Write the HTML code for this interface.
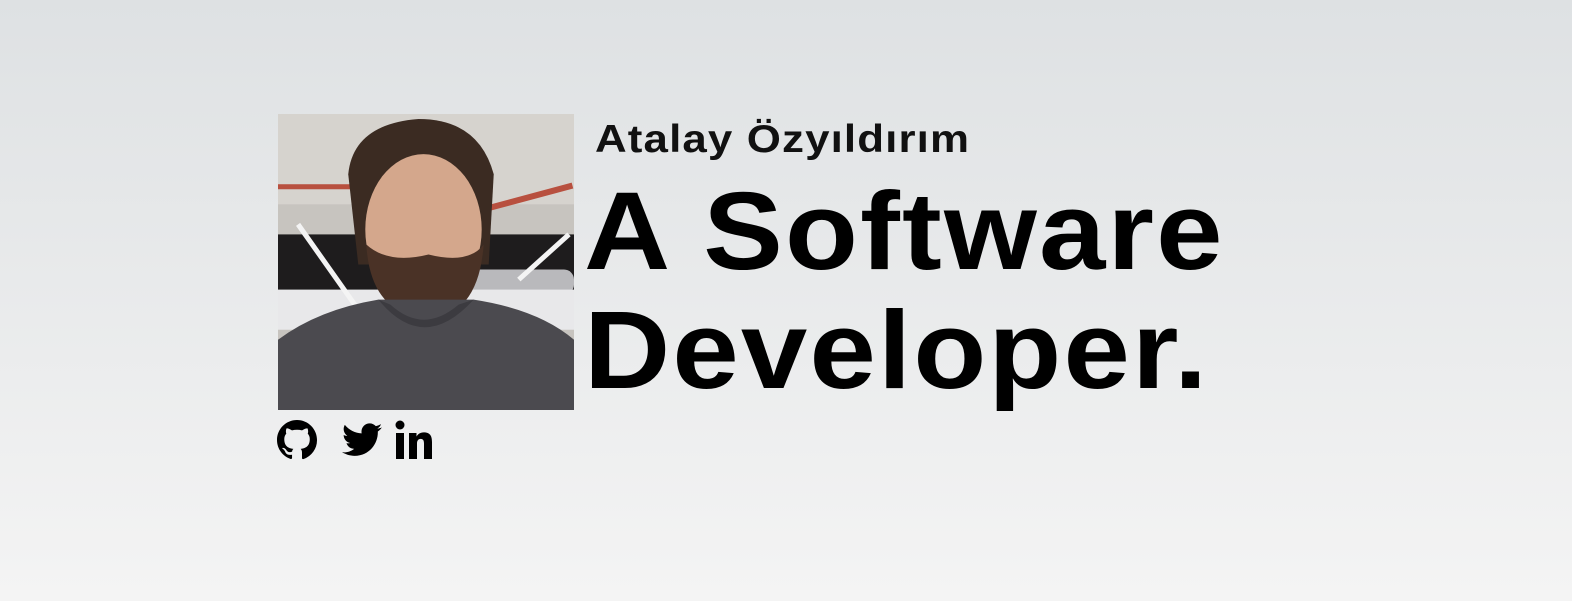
<!DOCTYPE html>
<html><head><style>
html,body{margin:0;width:1572px;height:601px;overflow:hidden}
body{background:linear-gradient(#dee1e3,#f4f4f4);font-family:"Liberation Sans",sans-serif;position:relative}
.photo{position:absolute;left:278px;top:114px;width:296px;height:296px;overflow:hidden;background:#c9c6c2}
.name{position:absolute;left:595px;top:118px;font-size:39px;font-weight:bold;letter-spacing:1px;color:#111;transform:scaleX(1.125);transform-origin:0 0;white-space:nowrap}
.big{position:absolute;left:584px;top:172px;font-size:110px;font-weight:bold;letter-spacing:2px;line-height:119px;color:#000;transform:scaleX(1.085);transform-origin:0 0;white-space:nowrap}
.icons{position:absolute;left:277px;top:420px}
</style></head><body>
<div class="photo">
<svg width="296" height="296" viewBox="0 0 295 295">
<rect width="295" height="295" fill="#c7c4bf"/>
<rect x="0" y="0" width="295" height="90" fill="#d6d3ce"/>
<rect x="0" y="70" width="120" height="5" fill="#b8503f"/>
<rect x="200" y="80" width="95" height="6" fill="#b8503f" transform="rotate(-15 250 83)"/>
<rect x="0" y="120" width="295" height="90" fill="#1e1c1d"/>
<rect x="120" y="155" width="175" height="25" fill="#b9b9bc" rx="10"/>
<rect x="0" y="175" width="295" height="40" fill="#e8e8ea"/>
<path d="M20 110 L80 195" stroke="#f4f4f4" stroke-width="5"/>
<path d="M290 120 L240 165" stroke="#f4f4f4" stroke-width="5"/>
<path d="M70 60 Q75 10 140 5 Q200 5 215 60 L210 150 L80 150 Z" fill="#3b2b22"/>
<ellipse cx="145" cy="115" rx="58" ry="75" fill="#d4a78c"/>
<path d="M88 130 Q92 200 150 205 Q200 200 205 130 Q190 150 150 140 Q110 150 88 130Z" fill="#4a3226"/>
<path d="M0 225 Q40 195 100 185 L195 185 Q260 195 295 225 L295 295 L0 295Z" fill="#4b4a4f"/>
<path d="M100 185 Q145 240 195 185 L180 190 Q145 220 112 190Z" fill="#3c3b40"/>
</svg>
</div>
<div class="name">Atalay Özyıldırım</div>
<div class="big">A Software<br>Developer.</div>
<div class="icons">
<svg width="40" height="40" viewBox="0 0 16 16" style="position:absolute;left:0;top:0"><path fill="#000" d="M8 0C3.58 0 0 3.580 0 8c0 3.54 2.29 6.53 5.47 7.59.4.07.55-.17.55-.38v-1.33c-2.23.48-2.7-1.070-2.7-1.07-.36-.92-.89-1.17-.89-1.17-.73-.5.05-.49.05-.49.8.06 1.230.83 1.23.83.72 1.22 1.870.87 2.33.66.07-.52.28-.87.51-1.07-1.78-.2-3.64-.89-3.64-3.95 0-.87.31-1.59.82-2.15-.08-.2-.36-1.02.08-2.12 0 0 .67-.21 2.2.82.64-.18 1.32-.27 2-.27.68 0 1.36.09 2 .27 1.53-1.04 2.2-.82 2.2-.82.44 1.1.16 1.92.08 2.12.51.56.82 1.27.82 2.15 0 3.07-1.87 3.75-3.65 3.95.29.25.54.73.54 1.48v2.2c0 .21.15.46.55.38A8.013 8.013 0 0016 8c0-4.42-3.58-8-8-8z"/></svg>
<svg width="40" height="34" viewBox="0 0 24 20" style="position:absolute;left:65px;top:3px"><path fill="#000" d="M24 2.4c-.9.4-1.8.6-2.8.8 1-.6 1.8-1.6 2.2-2.7-1 .6-2 1-3.1 1.2C19.3.6 18 0 16.6 0c-2.7 0-4.900 2.2-4.9 4.9 0 .4 0 .8.1 1.1C7.7 5.8 4.1 3.9 1.7.9c-.4.7-.7 1.6-.7 2.5 0 1.7.9 3.2 2.2 4.1-.8 0-1.6-.2-2.2-.6v.1c0 2.4 1.7 4.4 3.9 4.8-.4.1-.8.2-1.3.2-.3 0-.6 0-.9-.1.6 2 2.4 3.4 4.6 3.4-1.700 1.3-3.8 2.1-6.1 2.1-.4 0-.8 0-1.2-.1 2.2 1.4 4.8 2.2 7.5 2.2 9.1 0 14-7.5 14-14v-.6c1-.7 1.8-1.6 2.5-2.5z"/></svg>
<svg width="42" height="40" viewBox="0 0 42 40" style="position:absolute;left:118px;top:0"><circle cx="5" cy="5" r="4.5" fill="#000"/><rect x="1" y="13" width="8" height="26" fill="#000"/><path d="M14 13h7.5v3.6c1.2-2.2 3.6-4.2 7.2-4.2 6.4 0 8.3 3.6 8.3 9.6V39h-8V23.5c0-2.8-.8-4.6-3.3-4.6-2.6 0-3.7 2-3.7 4.6V39h-8z" fill="#000"/></svg>
</div>
</body></html>
